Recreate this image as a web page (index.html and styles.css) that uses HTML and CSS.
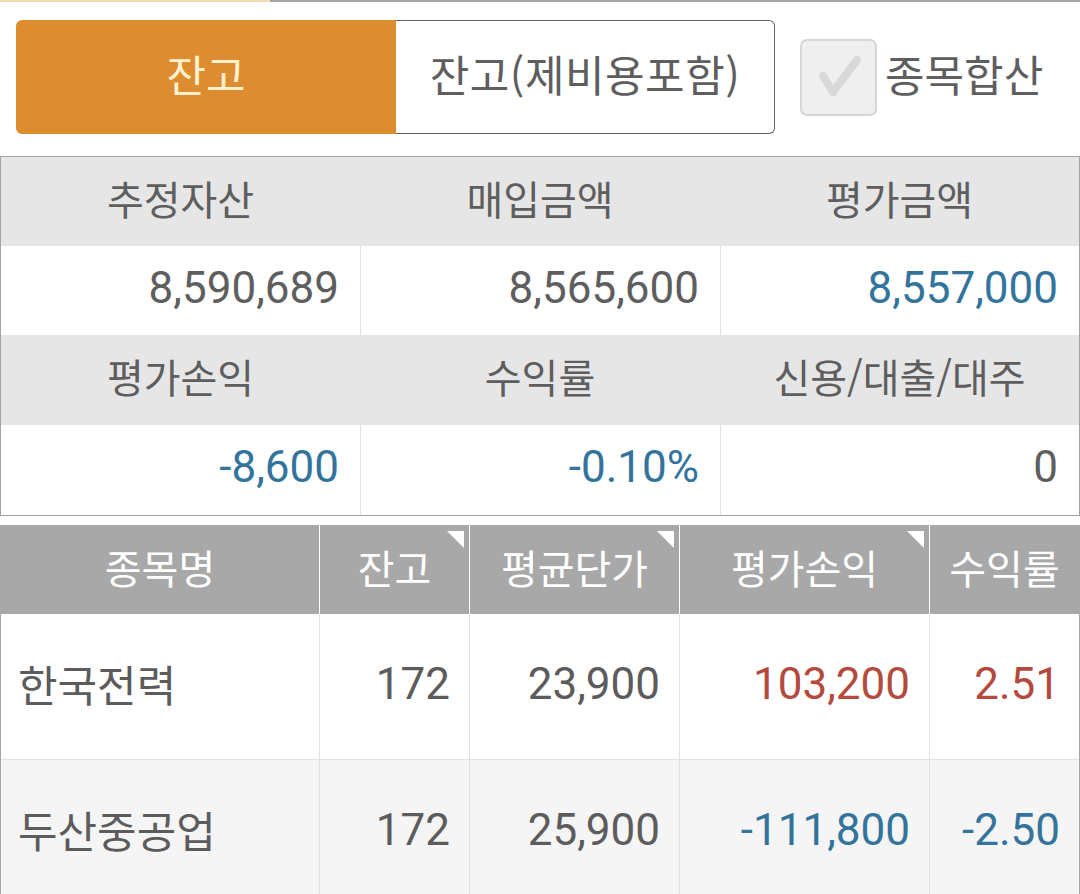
FILE: index.html
```html
<!DOCTYPE html>
<html lang="ko">
<head>
<meta charset="utf-8">
<link rel="stylesheet" href="styles.css">
</head>
<body>
<div class="topline"></div>
<div class="toolbar">
  <div class="segmented">
    <div class="seg seg-active">잔고</div>
    <div class="seg seg-idle">잔고(제비용포함)</div>
  </div>
  <div class="check">
    <div class="checkbox">
      <svg width="73" height="73" viewBox="0 0 73 73"><polyline points="21,35 31,51 55,19" fill="none" stroke="#d8d8d8" stroke-width="8" stroke-linecap="round" stroke-linejoin="round"/></svg>
    </div>
    <span class="check-label">종목합산</span>
  </div>
</div>

<div class="summary">
  <div class="s-head">추정자산</div>
  <div class="s-head">매입금액</div>
  <div class="s-head">평가금액</div>
  <div class="s-val">8,590,689</div>
  <div class="s-val sep">8,565,600</div>
  <div class="s-val sep blue">8,557,000</div>
  <div class="s-head tall">평가손익</div>
  <div class="s-head tall">수익률</div>
  <div class="s-head tall">신용/대출/대주</div>
  <div class="s-val tall blue">-8,600</div>
  <div class="s-val tall sep blue">-0.10%</div>
  <div class="s-val tall sep">0</div>
</div>

<div class="stocks">
  <div class="h-cell">종목명</div>
  <div class="h-cell sep-w sortable">잔고</div>
  <div class="h-cell sep-w sortable">평균단가</div>
  <div class="h-cell sep-w sortable">평가손익</div>
  <div class="h-cell sep-w">수익률</div>

  <div class="b-cell name">한국전력</div>
  <div class="b-cell num sep-g">172</div>
  <div class="b-cell num sep-g">23,900</div>
  <div class="b-cell num sep-g red">103,200</div>
  <div class="b-cell num sep-g red">2.51</div>

  <div class="b-cell name alt">두산중공업</div>
  <div class="b-cell num sep-g alt">172</div>
  <div class="b-cell num sep-g alt">25,900</div>
  <div class="b-cell num sep-g alt blue">-111,800</div>
  <div class="b-cell num sep-g alt blue">-2.50</div>
</div>
</body>
</html>
```

FILE: styles.css
```css
* { box-sizing: border-box; }
html, body { margin: 0; padding: 0; background: #ffffff; }
body {
  font-family: Roboto, "Noto Sans CJK KR", sans-serif;
  color: #5e5e5e;
  width: 1080px;
  height: 894px;
  overflow: hidden;
}

.topline {
  height: 2px;
  background: linear-gradient(to right, #f4dcb2 0, #f4dcb2 270px, #a4a4a4 270px, #a4a4a4 100%);
}

.toolbar {
  display: flex;
  align-items: center;
  padding: 17px 0 0 16px;
  height: 133px;
}

.segmented {
  display: flex;
  width: 759px;
  height: 114px;
}
.seg {
  flex: 1;
  display: flex;
  align-items: center;
  justify-content: center;
  font-family: "Noto Sans CJK KR", sans-serif;
  font-size: 43px;
  padding-bottom: 9px;
}
.seg-active {
  background: #dd8c30;
  color: #fdf1cf;
  border-radius: 6px 0 0 6px;
  flex: 0 0 380px;
}
.seg-idle {
  background: #ffffff;
  color: #5e5e5e;
  border: 1px solid #626262;
  border-left: none;
  border-radius: 0 6px 6px 0;
  letter-spacing: 0.5px;
}

.check {
  display: flex;
  align-items: center;
  margin-left: 25px;
}
.checkbox {
  width: 77px;
  height: 77px;
  border: 2px solid #d6d6d6;
  border-radius: 7px;
  background: #efefef;
}
.checkbox svg { display: block; }
.check-label {
  margin-left: 8px;
  font-family: "Noto Sans CJK KR", sans-serif;
  font-size: 43px;
  color: #5e5e5e;
  padding-bottom: 9px;
}

.summary {
  margin-top: 21px;
  display: grid;
  grid-template-columns: 359px 360px 1fr;
  border: 1px solid #a4a4a4;
}
.s-head {
  background: #e6e6e6;
  height: 89px;
  display: flex;
  align-items: center;
  justify-content: center;
  font-family: "Noto Sans CJK KR", sans-serif;
  font-size: 40px;
  color: #5e5e5e;
  padding-bottom: 8px;
}
.s-val {
  background: #ffffff;
  height: 89px;
  display: flex;
  align-items: center;
  justify-content: flex-end;
  padding-right: 21px;
  padding-bottom: 6px;
  font-size: 44px;
  color: #5e5e5e;
}
.tall { height: 90px; }
.sep { border-left: 1px solid #e2e2e2; }
.blue { color: #33749c !important; }
.red { color: #b44a3e !important; }

.stocks {
  margin-top: 9px;
  display: grid;
  grid-template-columns: 318px 150px 210px 250px 1fr;
  border-left: 1px solid #a8a8a8;
  border-right: 1px solid #a8a8a8;
}
.h-cell {
  position: relative;
  background: #a8a8a8;
  height: 89px;
  display: flex;
  align-items: center;
  justify-content: center;
  font-family: "Noto Sans CJK KR", sans-serif;
  font-size: 40px;
  color: #ffffff;
  padding-bottom: 6px;
}
.sep-w { border-left: 1px solid #ffffff; }
.sortable::after {
  content: "";
  position: absolute;
  top: 6px;
  right: 5px;
  width: 0;
  height: 0;
  border-top: 17px solid #ffffff;
  border-left: 17px solid transparent;
}
.b-cell {
  height: 146px;
  display: flex;
  align-items: center;
  background: #ffffff;
  border-bottom: 1px solid #e2e2e2;
  color: #5c5c5c;
}
.b-cell.alt { background: #f5f5f5; }
.name {
  font-family: "Noto Sans CJK KR", sans-serif;
  font-size: 43px;
  padding-left: 17px;
  padding-bottom: 8px;
}
.num {
  justify-content: flex-end;
  padding-right: 19px;
  padding-bottom: 6px;
  font-size: 44px;
}
.sep-g { border-left: 1px solid #e2e2e2; }
```
